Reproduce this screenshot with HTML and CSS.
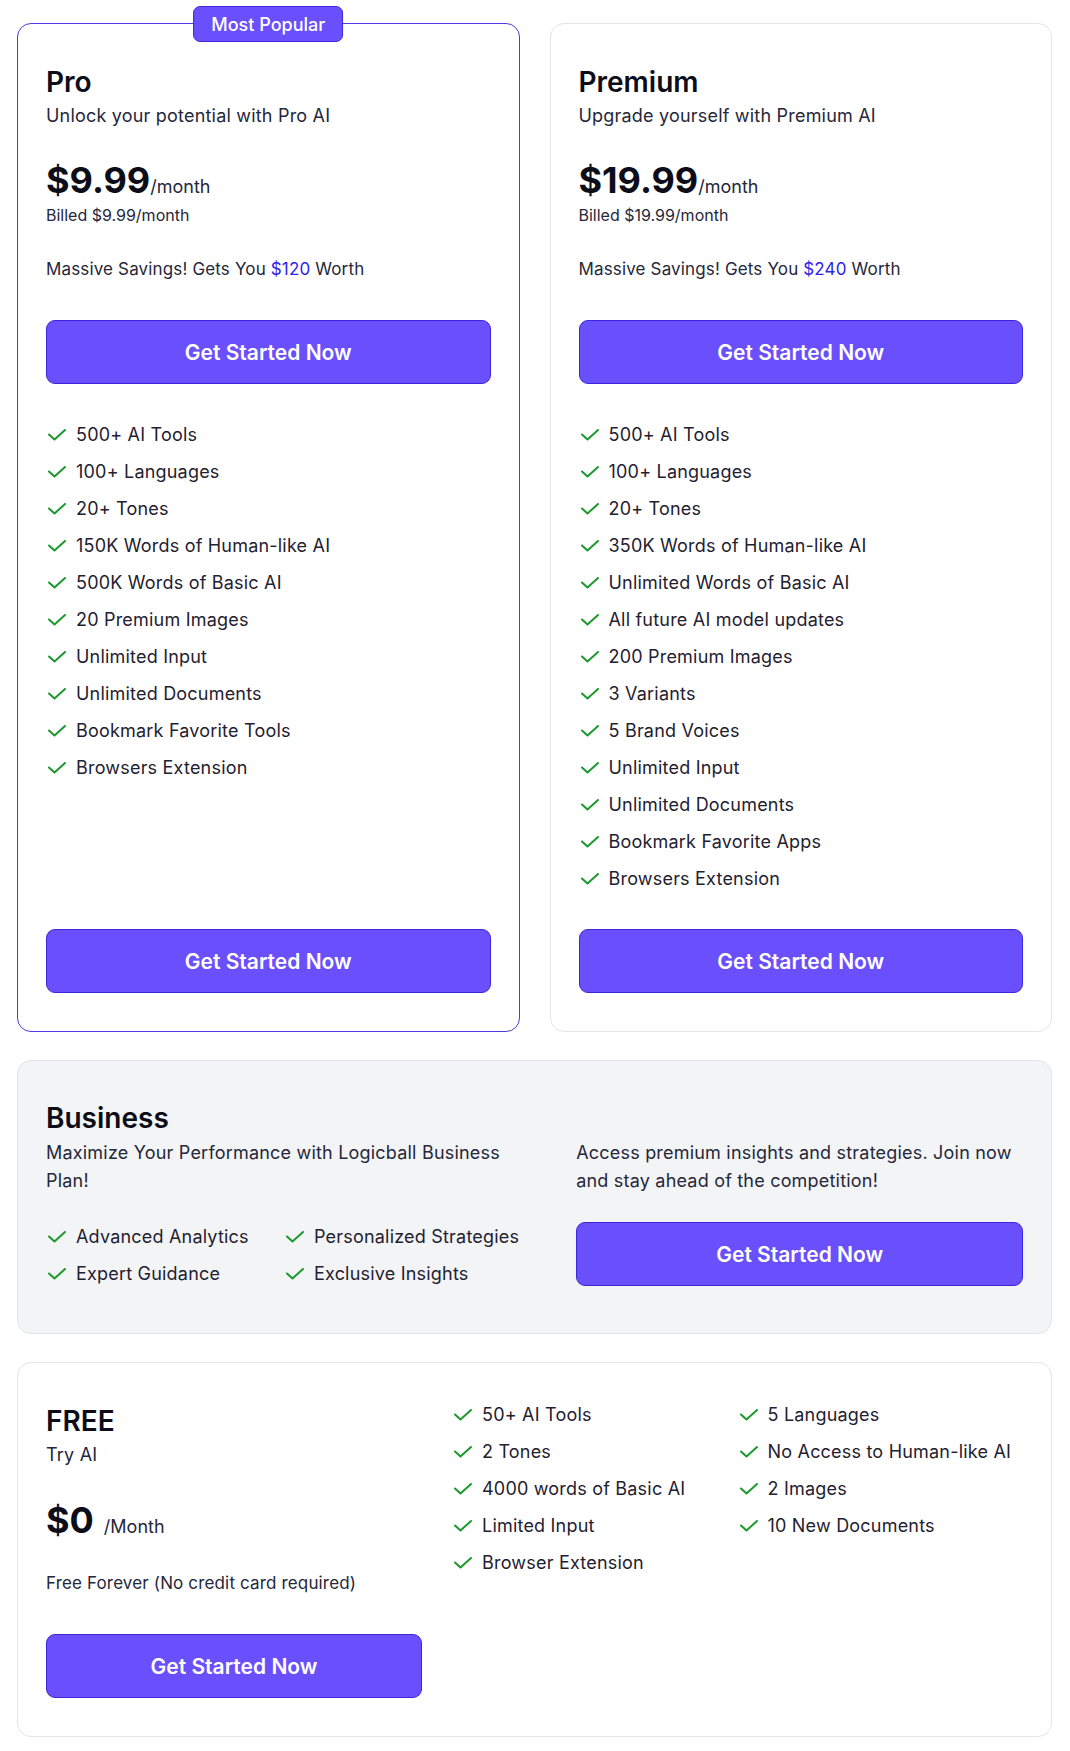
FILE: index.html
```html
<!DOCTYPE html>
<html lang="en">
<head>
<meta charset="utf-8">
<title>Pricing</title>
<link rel="stylesheet" href="styles.css">
</head>
<body>
<main class="pricing">
  <div class="plans">
    <section class="card card--popular">
      <span class="badge">Most Popular</span>
      <h2 class="plan-name">Pro</h2>
      <p class="tagline">Unlock your potential with Pro AI</p>
      <div class="price"><span class="amount">$9.99</span><span class="period">/month</span></div>
      <p class="billed">Billed $9.99/month</p>
      <p class="savings">Massive Savings! Gets You <span class="accent">$120</span> Worth</p>
      <a class="btn" href="#">Get Started Now</a>
      <ul class="features">
        <li><svg class="check" viewBox="0 0 20 12"><path d="M3 5.5 L8.5 10.5 L19 1"/></svg>500+ AI Tools</li>
        <li><svg class="check" viewBox="0 0 20 12"><path d="M3 5.5 L8.5 10.5 L19 1"/></svg>100+ Languages</li>
        <li><svg class="check" viewBox="0 0 20 12"><path d="M3 5.5 L8.5 10.5 L19 1"/></svg>20+ Tones</li>
        <li><svg class="check" viewBox="0 0 20 12"><path d="M3 5.5 L8.5 10.5 L19 1"/></svg>150K Words of Human-like AI</li>
        <li><svg class="check" viewBox="0 0 20 12"><path d="M3 5.5 L8.5 10.5 L19 1"/></svg>500K Words of Basic AI</li>
        <li><svg class="check" viewBox="0 0 20 12"><path d="M3 5.5 L8.5 10.5 L19 1"/></svg>20 Premium Images</li>
        <li><svg class="check" viewBox="0 0 20 12"><path d="M3 5.5 L8.5 10.5 L19 1"/></svg>Unlimited Input</li>
        <li><svg class="check" viewBox="0 0 20 12"><path d="M3 5.5 L8.5 10.5 L19 1"/></svg>Unlimited Documents</li>
        <li><svg class="check" viewBox="0 0 20 12"><path d="M3 5.5 L8.5 10.5 L19 1"/></svg>Bookmark Favorite Tools</li>
        <li><svg class="check" viewBox="0 0 20 12"><path d="M3 5.5 L8.5 10.5 L19 1"/></svg>Browsers Extension</li>
      </ul>
      <a class="btn btn--bottom" href="#">Get Started Now</a>
    </section>

    <section class="card">
      <h2 class="plan-name">Premium</h2>
      <p class="tagline">Upgrade yourself with Premium AI</p>
      <div class="price"><span class="amount">$19.99</span><span class="period">/month</span></div>
      <p class="billed">Billed $19.99/month</p>
      <p class="savings">Massive Savings! Gets You <span class="accent">$240</span> Worth</p>
      <a class="btn" href="#">Get Started Now</a>
      <ul class="features">
        <li><svg class="check" viewBox="0 0 20 12"><path d="M3 5.5 L8.5 10.5 L19 1"/></svg>500+ AI Tools</li>
        <li><svg class="check" viewBox="0 0 20 12"><path d="M3 5.5 L8.5 10.5 L19 1"/></svg>100+ Languages</li>
        <li><svg class="check" viewBox="0 0 20 12"><path d="M3 5.5 L8.5 10.5 L19 1"/></svg>20+ Tones</li>
        <li><svg class="check" viewBox="0 0 20 12"><path d="M3 5.5 L8.5 10.5 L19 1"/></svg>350K Words of Human-like AI</li>
        <li><svg class="check" viewBox="0 0 20 12"><path d="M3 5.5 L8.5 10.5 L19 1"/></svg>Unlimited Words of Basic AI</li>
        <li><svg class="check" viewBox="0 0 20 12"><path d="M3 5.5 L8.5 10.5 L19 1"/></svg>All future AI model updates</li>
        <li><svg class="check" viewBox="0 0 20 12"><path d="M3 5.5 L8.5 10.5 L19 1"/></svg>200 Premium Images</li>
        <li><svg class="check" viewBox="0 0 20 12"><path d="M3 5.5 L8.5 10.5 L19 1"/></svg>3 Variants</li>
        <li><svg class="check" viewBox="0 0 20 12"><path d="M3 5.5 L8.5 10.5 L19 1"/></svg>5 Brand Voices</li>
        <li><svg class="check" viewBox="0 0 20 12"><path d="M3 5.5 L8.5 10.5 L19 1"/></svg>Unlimited Input</li>
        <li><svg class="check" viewBox="0 0 20 12"><path d="M3 5.5 L8.5 10.5 L19 1"/></svg>Unlimited Documents</li>
        <li><svg class="check" viewBox="0 0 20 12"><path d="M3 5.5 L8.5 10.5 L19 1"/></svg>Bookmark Favorite Apps</li>
        <li><svg class="check" viewBox="0 0 20 12"><path d="M3 5.5 L8.5 10.5 L19 1"/></svg>Browsers Extension</li>
      </ul>
      <a class="btn btn--bottom" href="#">Get Started Now</a>
    </section>
  </div>

  <section class="card card--business">
    <h2 class="plan-name">Business</h2>
    <div class="biz-body">
      <div class="biz-left">
        <p class="tagline biz-text">Maximize Your Performance with Logicball Business Plan!</p>
        <ul class="features biz-features">
          <li><svg class="check" viewBox="0 0 20 12"><path d="M3 5.5 L8.5 10.5 L19 1"/></svg>Advanced Analytics</li>
          <li><svg class="check" viewBox="0 0 20 12"><path d="M3 5.5 L8.5 10.5 L19 1"/></svg>Personalized Strategies</li>
          <li><svg class="check" viewBox="0 0 20 12"><path d="M3 5.5 L8.5 10.5 L19 1"/></svg>Expert Guidance</li>
          <li><svg class="check" viewBox="0 0 20 12"><path d="M3 5.5 L8.5 10.5 L19 1"/></svg>Exclusive Insights</li>
        </ul>
      </div>
      <div class="biz-right">
        <p class="tagline biz-text">Access premium insights and strategies. Join now and stay ahead of the competition!</p>
        <a class="btn biz-btn" href="#">Get Started Now</a>
      </div>
    </div>
  </section>

  <section class="card card--free">
    <div class="free-left">
      <h2 class="plan-name">FREE</h2>
      <p class="tagline">Try AI</p>
      <div class="price"><span class="amount">$0</span><span class="period period--spaced">/Month</span></div>
      <p class="savings free-note">Free Forever (No credit card required)</p>
      <a class="btn" href="#">Get Started Now</a>
    </div>
    <div class="free-features">
      <ul class="features">
        <li><svg class="check" viewBox="0 0 20 12"><path d="M3 5.5 L8.5 10.5 L19 1"/></svg>50+ AI Tools</li>
        <li><svg class="check" viewBox="0 0 20 12"><path d="M3 5.5 L8.5 10.5 L19 1"/></svg>2 Tones</li>
        <li><svg class="check" viewBox="0 0 20 12"><path d="M3 5.5 L8.5 10.5 L19 1"/></svg>4000 words of Basic AI</li>
        <li><svg class="check" viewBox="0 0 20 12"><path d="M3 5.5 L8.5 10.5 L19 1"/></svg>Limited Input</li>
        <li><svg class="check" viewBox="0 0 20 12"><path d="M3 5.5 L8.5 10.5 L19 1"/></svg>Browser Extension</li>
      </ul>
      <ul class="features">
        <li><svg class="check" viewBox="0 0 20 12"><path d="M3 5.5 L8.5 10.5 L19 1"/></svg>5 Languages</li>
        <li><svg class="check" viewBox="0 0 20 12"><path d="M3 5.5 L8.5 10.5 L19 1"/></svg>No Access to Human-like AI</li>
        <li><svg class="check" viewBox="0 0 20 12"><path d="M3 5.5 L8.5 10.5 L19 1"/></svg>2 Images</li>
        <li><svg class="check" viewBox="0 0 20 12"><path d="M3 5.5 L8.5 10.5 L19 1"/></svg>10 New Documents</li>
      </ul>
    </div>
  </section>
</main>
</body>
</html>
```

FILE: styles.css
```css
* { box-sizing: border-box; }

html, body {
  margin: 0;
  padding: 0;
  background: #ffffff;
}

body {
  font-family: Inter, "Noto Sans", "Liberation Sans", sans-serif;
  color: #1f2130;
}

.pricing {
  display: flex;
  flex-direction: column;
  gap: 28px;
  padding: 23px 18px 14px 17px;
}

.plans {
  display: grid;
  grid-template-columns: 1fr 1fr;
  column-gap: 30px;
}

.card {
  position: relative;
  display: flex;
  flex-direction: column;
  background: #ffffff;
  border: 1px solid #e3e4e8;
  border-radius: 14px;
  padding: 40px 28px 38px;
}

.card--popular {
  border-color: #4a3be0;
}

.badge {
  position: absolute;
  top: -18px;
  left: 50%;
  transform: translateX(-50%);
  height: 36px;
  padding: 0 17px;
  display: flex;
  align-items: center;
  background: #6a4ffd;
  border: 1px solid #3b27d9;
  border-radius: 7px;
  color: #ffffff;
  font-size: 18px;
  font-weight: 500;
  white-space: nowrap;
}

.plan-name {
  margin: 0;
  font-size: 28px;
  line-height: 36px;
  font-weight: 600;
  color: #0c0d18;
}

.tagline {
  margin: 2px 0 0;
  font-size: 18px;
  line-height: 28px;
  letter-spacing: 0.2px;
  color: #25273a;
}

.price {
  margin-top: 30px;
  display: flex;
  align-items: baseline;
  height: 40px;
}

.amount {
  font-size: 36px;
  line-height: 40px;
  font-weight: 700;
  color: #0c0d18;
}

.period {
  font-size: 18px;
  line-height: 20px;
  color: #25273a;
}

.period--spaced {
  margin-left: 10px;
}

.billed {
  margin: 4px 0 0;
  font-size: 16px;
  line-height: 22px;
  color: #25273a;
}

.savings {
  margin: 31px 0 0;
  font-size: 17px;
  line-height: 24px;
  letter-spacing: 0.15px;
  color: #25273a;
}

.accent {
  color: #2f22e8;
}

.btn {
  display: flex;
  align-items: center;
  justify-content: center;
  height: 64px;
  margin-top: 39px;
  background: #6a4ffd;
  border: 1px solid #3b27d9;
  border-radius: 9px;
  color: #ffffff;
  font-size: 21px;
  font-weight: 600;
  text-decoration: none;
}

.btn--bottom {
  margin-top: auto;
}

.features {
  list-style: none;
  margin: 32px 0 32px;
  padding: 0;
}

.features li {
  display: flex;
  align-items: center;
  gap: 10px;
  height: 37px;
  font-size: 18px;
  letter-spacing: 0.2px;
  white-space: nowrap;
  color: #1f2130;
}

.check {
  width: 20px;
  height: 12px;
  flex: none;
  fill: none;
  stroke: #1a9a2c;
  stroke-width: 2;
  stroke-linecap: round;
  stroke-linejoin: round;
}

/* Business */
.card--business {
  background: #f3f4f6;
  padding: 39px 28px 41px;
}

.biz-body {
  display: grid;
  grid-template-columns: 1fr 447px;
  column-gap: 57px;
}

.biz-text {
  margin-top: 3px;
  line-height: 27.5px;
}

.biz-features {
  display: grid;
  grid-template-columns: 238px 1fr;
  margin: 24px 0 0;
}

.biz-btn {
  margin-top: 28px;
}

/* Free */
.card--free {
  display: grid;
  grid-template-columns: 376px 1fr;
  column-gap: 30px;
  padding: 40px 28px 38px;
}

.free-left {
  display: flex;
  flex-direction: column;
}

.free-left .price {
  margin-top: 31px;
}

.free-note {
  margin-top: 31px;
}

.free-features {
  display: grid;
  grid-template-columns: 1fr 1fr;
  align-content: start;
  margin-top: -7px;
}

.free-features .features {
  margin: 0;
}
```
